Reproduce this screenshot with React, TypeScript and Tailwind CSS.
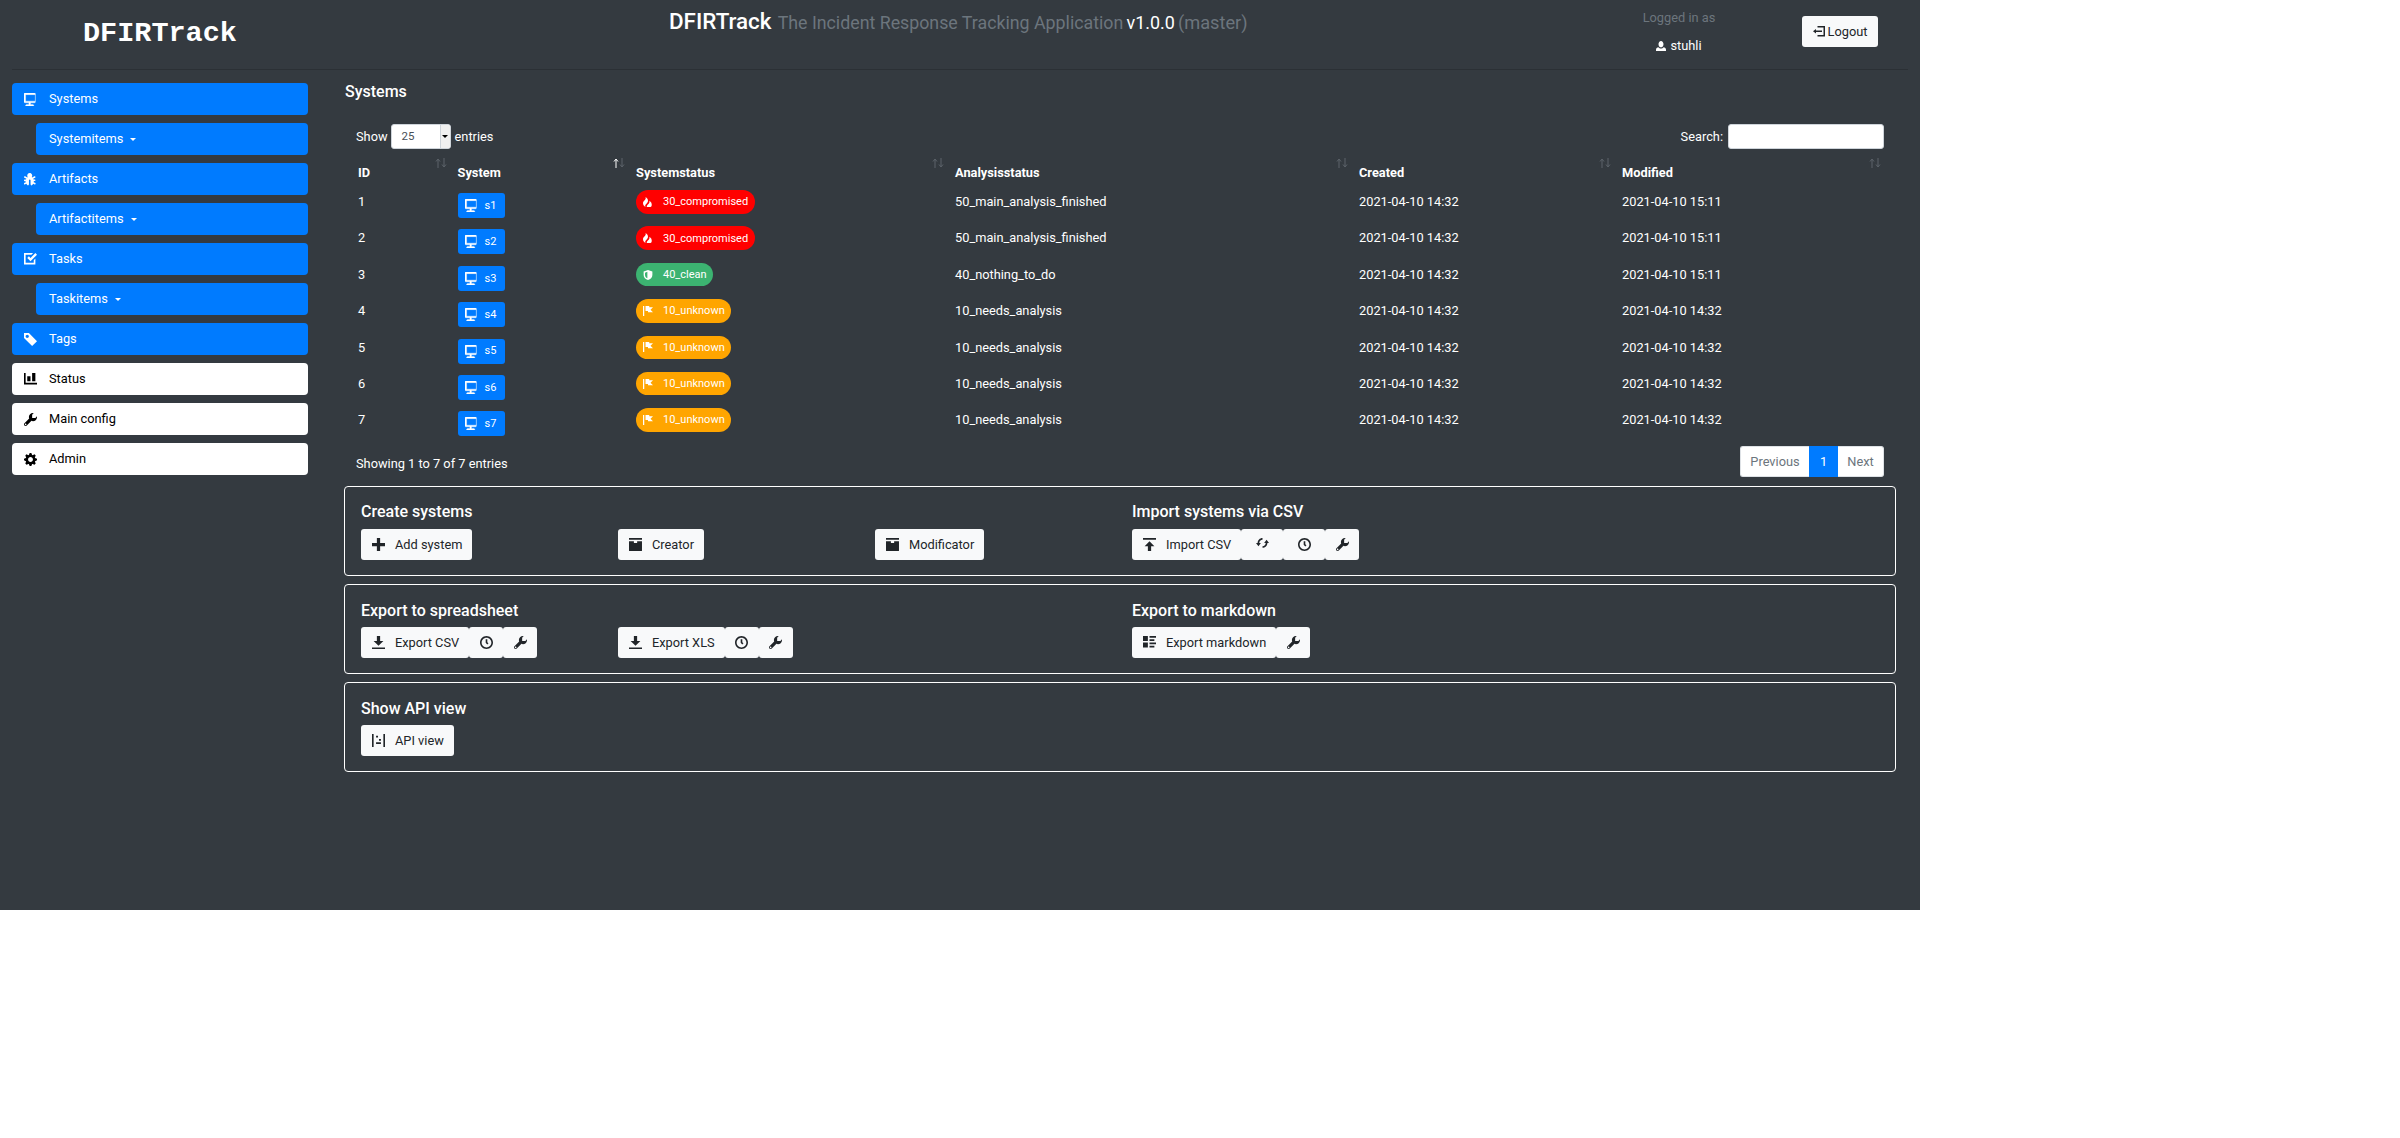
import React from "react";

const P: Record<string, string> = {
  monitor: "M.34 0a.5.5 0 0 0-.34.5v5a.5.5 0 0 0 .5.5h2.5v1h-1c-.55 0-1 .22-1 .5v.5h5v-.5c0-.28-.45-.5-1-.5h-1v-1h2.5a.5.5 0 0 0 .5-.5v-5a.5.5 0 0 0-.5-.5h-7a.5.5 0 0 0-.09 0 .5.5 0 0 0-.06 0zm.66 1h6v4h-6v-4z",
  wrench: "M5.5 0c-1.38 0-2.5 1.12-2.5 2.5 0 .32.08.62.19.91l-2.91 2.88c-.39.39-.39 1.05 0 1.44.2.2.46.28.72.28.26 0 .52-.09.72-.28l2.88-2.91c.28.11.58.19.91.19 1.38 0 2.5-1.12 2.5-2.5 0-.16 0-.32-.03-.47l-.97.97h-2v-2l.97-.97c-.15-.03-.31-.03-.47-.03zm-4.5 6.5c.28 0 .5.22.5.5s-.22.5-.5.5-.5-.22-.5-.5.22-.5.5-.5z",
  cog: "M3.5 0l-.5 1.19c-.1.03-.19.08-.28.13l-1.19-.5-.72.72.5 1.19c-.05.1-.09.18-.13.28l-1.19.5v1l1.19.5c.04.1.08.18.13.28l-.5 1.19.72.72 1.19-.5c.09.04.18.09.28.13l.5 1.19h1l.5-1.19c.09-.04.19-.08.28-.13l1.19.5.72-.72-.5-1.19c.04-.09.09-.19.13-.28l1.19-.5v-1l-1.19-.5c-.03-.09-.08-.19-.13-.28l.5-1.19-.72-.72-1.19.5c-.09-.04-.19-.09-.28-.13l-.5-1.19h-1zm.5 2.5c.83 0 1.5.67 1.5 1.5s-.67 1.5-1.5 1.5-1.5-.67-1.5-1.5.67-1.5 1.5-1.5z",
  clock: "M4 0c-2.2 0-4 1.8-4 4s1.8 4 4 4 4-1.8 4-4-1.8-4-4-4zm0 1c1.66 0 3 1.34 3 3s-1.34 3-3 3-3-1.34-3-3 1.34-3 3-3zm-.5 1v2.22l.16.13.5.5.34.38.72-.72-.38-.34-.34-.34v-1.81h-1z",
  plus: "M3 0v3h-3v2h3v3h2v-3h3v-2h-3v-3h-2z",
  box: "M0 0v1h8v-1h-8zm0 2v5.91c0 .05.04.09.09.09h7.81c.05 0 .09-.04.09-.09v-5.91h-2.98v1.02h-2v-1.02h-3.02z",
  download: "M3 0v3h-2l3 3 3-3h-2v-3h-2zm-3 7v1h8v-1h-8z",
  upload: "M0 0v1h8v-1h-8zm4 2l-3 3h2v3h2v-3h2l-3-3z",
  tag: "M0 0v3l5 5 3-3-5-5h-3zm2 1c.55 0 1 .45 1 1s-.45 1-1 1-1-.45-1-1 .45-1 1-1z",
  chart: "M0 0v7h8v-1h-7v-6h-1zm5 0v5h2v-5h-2zm-3 2v3h2v-3h-2z",
  task: "M0 0v7h7v-3.59l-1 1v1.59h-5v-5h3.59l1-1h-5.59zm7 0l-3 3-1-1-1 1 2 2 4-4-1-1z",
  bug: "M3.5 0c-1.19 0-1.98 1.69-1.19 2.5-.09.07-.2.14-.28.22l-1.31-.66a.5.5 0 0 0-.34-.06.5.5 0 0 0-.09.94l1.16.56c-.09.16-.19.33-.25.5h-.69a.5.5 0 0 0-.09 0 .5.5 0 1 0 .09 1h.5c0 .23.03.44.09.66l-.78.41a.5.5 0 1 0 .44.88l.66-.34c.25.46.62.85 1.03 1.09.35-.19.59-.44.59-.72v-1.44a.5.5 0 0 0 0-.09v-.81a.5.5 0 0 0 0-.22c.05-.23.26-.41.5-.41.28 0 .5.22.5.5v.88a.5.5 0 0 0 0 .09v.06a.5.5 0 0 0 0 .09v1.34c0 .27.24.53.59.72.41-.25.79-.63 1.03-1.09l.66.34a.5.5 0 1 0 .44-.88l-.78-.41c.04-.21.09-.43.09-.66h.5a.5.5 0 1 0 0-1h-.69c-.06-.17-.16-.34-.25-.5l1.16-.56a.5.5 0 0 0-.31-.94.5.5 0 0 0-.13.06l-1.31.66c-.09-.08-.19-.15-.28-.22.78-.83 0-2.5-1.19-2.5z",
  fire: "M2 0c1 2-2 3-2 5s2 3 2 3c-.98-1.98 2-3 2-5s-2-3-2-3zm3 3c1 2-2 3-2 5h3c.4 0 1-.5 1-2 0-2-2-3-2-3z",
  flag: "M0 0v8h1v-8h-1zm2 0v4h2v1h4l-2-1.97 2-2.03h-3v-1h-3z",
  shield: "M4 0l3.5 1.2v2.8c0 2.2-1.5 3.4-3.5 4-2-.6-3.5-1.8-3.5-4v-2.8zm-.5 1.4l-1.9.7v1.9c0 1.2.7 2 1.9 2.6z",
  person: "M4 0c-1.1 0-2 1.12-2 2.5s.9 2.5 2 2.5 2-1.12 2-2.5-.9-2.5-2-2.5zm-2.09 5c-1.06.05-1.91.92-1.91 2v1h8v-1c0-1.08-.84-1.95-1.91-2-.54.61-1.28 1-2.09 1-.81 0-1.55-.39-2.09-1z",
  logout: "M3 0v1h4v5h-4v1h5v-7h-5zm-1 2l-2 1.5 2 1.5v-1h4v-1h-4v-1z",
  loop: "M4 0c-1.65 0-3 1.35-3 3h-1l1.5 2 1.5-2h-1c0-1.11.89-2 2-2v-1zm2.5 1l-1.5 2h1c0 1.11-.89 2-2 2v1c1.65 0 3-1.35 3-3h1l-1.5-2z",
  rich: "M0 0v3h3v-3h-3zm4 0v1h4v-1h-4zm0 2v1h3v-1h-3zm-4 2v3h3v-3h-3zm4 0v1h4v-1h-4zm0 2v1h3v-1h-3z",
  api: "M0 0v8h1v-8h-1zm7 0v8h1v-8h-1zm-4.5 1v1.2h1.2v-1.2h-1.2zm1.8 2v1.2h1.2v-1.2h-1.2zm-1.8 2v1.2h3v-1.2h-3z",
};

function Icon({ n, className = "" }: { n: string; className?: string }) {
  return (
    <svg
      viewBox="0 0 8 8"
      fill="currentColor"
      fillRule="evenodd"
      stroke={n === "monitor" ? "currentColor" : "none"}
      strokeWidth={n === "monitor" ? 0.2 : 0}
      className={`inline-block shrink-0 ${className}`}
    >
      <path d={P[n]} />
    </svg>
  );
}

function Side({ icon, label, sub, white, caret }: { icon?: string; label: string; sub?: boolean; white?: boolean; caret?: boolean }) {
  return (
    <div className={`flex h-8 items-center rounded-[4px] ${sub ? "ml-6 pl-[13px]" : "pl-3"} ${white ? "bg-white text-black" : "bg-[#007bff] text-white"}`}>
      {icon && <Icon n={icon} className="mr-[12px] h-[13px] w-[13px]" />}
      <span>{label}</span>
      {caret && <span className="ml-[7px] h-0 w-0 border-x-[3px] border-t-[3px] border-x-transparent border-t-white" />}
    </div>
  );
}

function Sort({ active }: { active?: boolean }) {
  return (
    <svg viewBox="0 0 12 10" fill="none" strokeWidth="1" className="absolute right-[3px] top-[-1px] h-[10px] w-[12px] text-[#5c636a]">
      <path d="M3 10V1.5M1 3.5l2-2.5 2 2.5" stroke={active ? "#ffffff" : "currentColor"} />
      <path d="M9 0v8.5M7 6.5l2 2.5 2-2.5" stroke="currentColor" />
    </svg>
  );
}

const STATUS: Record<string, { c: string; i: string; t: string }> = {
  c: { c: "bg-[#ff0000]", i: "fire", t: "30_compromised" },
  g: { c: "bg-[#3cb371]", i: "shield", t: "40_clean" },
  u: { c: "bg-[#ffa500]", i: "flag", t: "10_unknown" },
};

const ROWS = [
  ["1", "s1", "c", "50_main_analysis_finished", "2021-04-10 15:11"],
  ["2", "s2", "c", "50_main_analysis_finished", "2021-04-10 15:11"],
  ["3", "s3", "g", "40_nothing_to_do", "2021-04-10 15:11"],
  ["4", "s4", "u", "10_needs_analysis", "2021-04-10 14:32"],
  ["5", "s5", "u", "10_needs_analysis", "2021-04-10 14:32"],
  ["6", "s6", "u", "10_needs_analysis", "2021-04-10 14:32"],
  ["7", "s7", "u", "10_needs_analysis", "2021-04-10 14:32"],
];

function Btn({ icon, label, w }: { icon: string; label?: string; w?: string }) {
  return (
    <span className={`flex h-[31px] items-center rounded-[3px] bg-[#f8f9fa] text-[#212529] ${label ? "pl-[11px] pr-[10px]" : `justify-center ${w}`}`}>
      <Icon n={icon} className={`h-[13px] w-[13px] ${label ? "mr-[10px]" : ""}`} />
      {label}
    </span>
  );
}

function Panel({ children }: { children: React.ReactNode }) {
  return (
    <section className="rounded-[4px] border border-white px-4 pt-[14px] pb-[15px]">
      <div className="grid grid-cols-[257px_257px_257px_1fr]">{children}</div>
    </section>
  );
}

function Cell({ title, low, children }: { title?: string; low?: boolean; children?: React.ReactNode }) {
  return (
    <div>
      <h5 className={`h-[22px] whitespace-nowrap text-[16px] font-medium leading-[22px] text-white ${low ? "mb-[5px] mt-[1px]" : "mb-[6px]"} ${title ? "" : "invisible"}`}>{title || "-"}</h5>
      <div className="flex items-start">{children}</div>
    </div>
  );
}

export default function App() {
  return (
    <div className="min-h-[1138px] bg-white font-['Roboto',sans-serif] text-[12.8px] leading-[19.2px]">
      <div className="h-[910px] w-[1920px] bg-[#343a40] px-3 text-white">
        <header className="grid h-[70px] grid-cols-[316px_1256px_218px_1fr] border-b border-[#2b3035]">
          <div className="pl-[71px] pt-[16px] font-['Liberation_Mono',monospace] text-[28.5px] font-bold leading-[36px]">DFIRTrack</div>
          <div className="pl-[341px] pt-[5px] whitespace-nowrap">
            <span className="text-[22.4px] font-medium leading-[32px]">DFIRTrack</span>{" "}
            <span className="ml-[3px] text-[17.8px] leading-[32px] text-[#6c757d]">The Incident Response Tracking Application</span>{" "}
            <span className="text-[17.92px] leading-[32px]">v1.0.0</span>{" "}
            <span className="text-[18.2px] leading-[32px] text-[#6c757d]">(master)</span>
          </div>
          <div className="text-center">
            <div className="w-[190px] pt-[8px] text-[#6c757d]">Logged in as</div>
            <div className="flex w-[190px] items-center justify-center pt-[9px]">
              <Icon n="person" className="mr-1 h-[10px] w-[10px]" />
              stuhli
            </div>
          </div>
          <div className="pt-4">
            <span className="flex h-[31px] w-[76px] items-center justify-center rounded-[3px] bg-[#f8f9fa] text-[#212529]">
              <Icon n="logout" className="mr-[3px] h-3 w-3" />
              Logout
            </span>
          </div>
        </header>

        <div className="flex">
          <nav className="flex w-[296px] shrink-0 flex-col gap-2 pt-[13px]">
            <Side icon="monitor" label="Systems" />
            <Side label="Systemitems" sub caret />
            <Side icon="bug" label="Artifacts" />
            <Side label="Artifactitems" sub caret />
            <Side icon="task" label="Tasks" />
            <Side label="Taskitems" sub caret />
            <Side icon="tag" label="Tags" />
            <Side icon="chart" label="Status" white />
            <Side icon="wrench" label="Main config" white />
            <Side icon="cog" label="Admin" white />
          </nav>

          <main className="ml-[36px] w-[1552px]">
            <h1 className="pl-[1px] pt-[10px] text-[16px] font-medium leading-[24px]">Systems</h1>

            <div className="mt-[20px] flex h-[25px] items-center justify-between pl-3 pr-3">
              <div className="flex items-center">
                Show
                <span className="relative ml-[3px] mr-[4px] flex h-[25px] w-[60px] items-center overflow-hidden rounded-[3px] border border-[#ced4da] bg-white pl-[10px] text-[11.5px] text-[#495057]">
                  25
                  <span className="absolute bottom-0 right-0 top-0 flex w-[10px] items-center justify-center border-l border-[#ced4da] bg-[#f0f0f0]">
                    <span className="h-0 w-0 border-x-[3px] border-t-[3px] border-x-transparent border-t-black" />
                  </span>
                </span>
                entries
              </div>
              <div className="flex items-center">
                Search:
                <span className="ml-[5px] h-[25px] w-[156px] rounded-[3px] border border-[#ced4da] bg-white" />
              </div>
            </div>

            <table className="ml-[6px] mt-[10px] w-[1534px] table-fixed border-collapse">
              <colgroup>
                <col className="w-[99.5px]" />
                <col className="w-[178.5px]" />
                <col className="w-[319px]" />
                <col className="w-[404px]" />
                <col className="w-[263px]" />
                <col className="w-[270px]" />
              </colgroup>
              <thead>
                <tr className="h-[26px] text-left">
                  {["ID", "System", "Systemstatus", "Analysisstatus", "Created", "Modified"].map((h, i) => (
                    <th key={h} className="relative px-2 pb-[3px] align-bottom font-bold">
                      {h}
                      <Sort active={i === 1} />
                    </th>
                  ))}
                </tr>
              </thead>
              <tbody>
                {ROWS.map((r) => {
                  const s = STATUS[r[2]];
                  return (
                    <tr key={r[0]} className="h-[36.4px]">
                      <td className="px-2 align-top pt-[7px]">{r[0]}</td>
                      <td className="px-2 align-top pt-[8px]">
                        <span className="flex h-[25px] w-[47px] items-center rounded-[3px] bg-[#007bff] pl-[7px] text-[11px]">
                          <Icon n="monitor" className="mr-[7px] h-[13px] w-[13px]" />
                          {r[1]}
                        </span>
                      </td>
                      <td className="px-2 align-top pt-[5px]">
                        <span className={`flex h-[23.5px] w-fit items-center rounded-full pl-[7px] pr-[6.5px] text-[11px] ${s.c}`}>
                          <Icon n={s.i} className="mr-[10px] h-[10px] w-[10px]" />
                          {s.t}
                        </span>
                      </td>
                      <td className="px-2 align-top pt-[7px]">{r[3]}</td>
                      <td className="px-2 align-top pt-[7px]">2021-04-10 14:32</td>
                      <td className="px-2 align-top pt-[7px]">{r[4]}</td>
                    </tr>
                  );
                })}
              </tbody>
            </table>

            <div className="mt-[6px] flex h-[31px] items-start justify-between pl-3 pr-3">
              <span className="pt-[8px]">Showing 1 to 7 of 7 entries</span>
              <div className="flex h-[31px]">
                <span className="flex w-[69px] items-center justify-center rounded-l-[3px] border border-r-0 border-[#dee2e6] bg-white text-[#6c757d]">Previous</span>
                <span className="flex w-[29px] items-center justify-center bg-[#007bff] text-white">1</span>
                <span className="flex w-[46px] items-center justify-center rounded-r-[3px] border border-l-0 border-[#dee2e6] bg-white text-[#6c757d]">Next</span>
              </div>
            </div>

            <div className="mt-[9px] flex flex-col gap-2">
              <Panel>
                <Cell title="Create systems"><Btn icon="plus" label="Add system" /></Cell>
                <Cell><Btn icon="box" label="Creator" /></Cell>
                <Cell><Btn icon="box" label="Modificator" /></Cell>
                <Cell title="Import systems via CSV">
                  <Btn icon="upload" label="Import CSV" />
                  <Btn icon="loop" w="w-[42px]" />
                  <Btn icon="clock" w="w-[42px]" />
                  <Btn icon="wrench" w="w-[34px]" />
                </Cell>
              </Panel>
              <Panel>
                <Cell low title="Export to spreadsheet">
                  <Btn icon="download" label="Export CSV" />
                  <Btn icon="clock" w="w-[34px]" />
                  <Btn icon="wrench" w="w-[34px]" />
                </Cell>
                <Cell low>
                  <Btn icon="download" label="Export XLS" />
                  <Btn icon="clock" w="w-[34px]" />
                  <Btn icon="wrench" w="w-[34px]" />
                </Cell>
                <div />
                <Cell low title="Export to markdown">
                  <Btn icon="rich" label="Export markdown" />
                  <Btn icon="wrench" w="w-[34px]" />
                </Cell>
              </Panel>
              <Panel>
                <Cell low title="Show API view"><Btn icon="api" label="API view" /></Cell>
              </Panel>
            </div>
          </main>
        </div>
      </div>
    </div>
  );
}
